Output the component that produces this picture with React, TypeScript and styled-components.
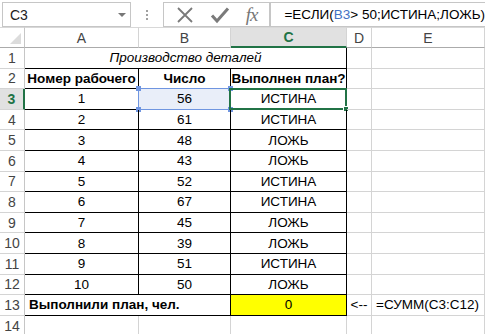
import React from "react";
import styled, { createGlobalStyle } from "styled-components";

const GlobalStyle = createGlobalStyle`
  html, body { margin: 0; padding: 0; background: #ffffff; }
  body { font-family: "Liberation Sans", Arial, sans-serif; }
  * { box-sizing: border-box; }
`;

const Page = styled.div`
  width: 485px;
  height: 334px;
  overflow: hidden;
  display: flex;
  flex-direction: column;
  background: #fff;
`;

const TopBar = styled.div`
  display: flex;
  align-items: flex-start;
  height: 37px;
  padding: 2px 0 0 2px;
`;

const NameBox = styled.div`
  width: 135px;
  height: 25px;
  border: 1px solid #c6c6c6;
  display: flex;
  align-items: center;
  justify-content: space-between;
  padding: 0 4px 0 7px;
  font-size: 14px;
  color: #222;
`;

const DropArrow = styled.span`
  width: 0;
  height: 0;
  border-left: 4px solid transparent;
  border-right: 4px solid transparent;
  border-top: 4px solid #777;
`;

const Dots = styled.div`
  width: 34px;
  height: 25px;
  display: flex;
  flex-direction: column;
  align-items: center;
  justify-content: center;
  gap: 2px;
  & > span { width: 2px; height: 2px; background: #a0a0a0; }
`;

const FxButtons = styled.div`
  width: 113px;
  height: 25px;
  border: 1px solid #c6c6c6;
  display: flex;
  align-items: center;
  justify-content: space-around;
  padding: 0 4px;
`;

const Fx = styled.span`
  font-family: "Liberation Serif", "Times New Roman", serif;
  font-style: italic;
  font-size: 19px;
  color: #777;
  letter-spacing: -1px;
`;

const FormulaInput = styled.div`
  flex: 1;
  height: 25px;
  border: 1px solid #c6c6c6;
  border-right: none;
  display: flex;
  align-items: center;
  padding-left: 13px;
  font-size: 13.5px;
  color: #000;
  white-space: nowrap;
`;

const RefText = styled.span`
  color: #4472c4;
`;

const Sheet = styled.div`
  display: grid;
  grid-template-columns: 25px 114px 92px 116px 25px 113px;
  grid-template-rows: 21px repeat(14, 20.6px);
  font-size: 13.5px;
`;

const Corner = styled.div`
  position: relative;
  border-right: 1px solid #c6c6c6;
  border-bottom: 1px solid #ababab;
  border-top: 1px solid #d8d8d8;
  &::after {
    content: "";
    position: absolute;
    right: 3px;
    bottom: 3px;
    width: 0;
    height: 0;
    border-left: 11px solid transparent;
    border-bottom: 11px solid #dcdcdc;
  }
`;

const ColHead = styled.div<{ $active?: boolean }>`
  display: flex;
  align-items: center;
  justify-content: center;
  border-top: 1px solid #d8d8d8;
  border-right: 1px solid #d4d4d4;
  border-bottom: ${(p) => (p.$active ? "2px solid #217346" : "1px solid #ababab")};
  background: ${(p) => (p.$active ? "#e1e1e1" : "#fff")};
  color: ${(p) => (p.$active ? "#217346" : "#444")};
  font-weight: ${(p) => (p.$active ? "bold" : "normal")};
  font-size: 14px;
`;

const RowHead = styled.div<{ $active?: boolean }>`
  display: flex;
  align-items: center;
  justify-content: center;
  border-bottom: 1px solid #d4d4d4;
  border-right: ${(p) => (p.$active ? "2px solid #217346" : "1px solid #c6c6c6")};
  background: ${(p) => (p.$active ? "#e1e1e1" : "#fff")};
  color: ${(p) => (p.$active ? "#217346" : "#444")};
  font-weight: ${(p) => (p.$active ? "bold" : "normal")};
  font-size: 14px;
`;

const Cell = styled.div<{
  $span?: number;
  $align?: "left" | "center";
  $bold?: boolean;
  $italic?: boolean;
  $bg?: string;
  $br?: boolean;
  $bb?: boolean;
}>`
  position: relative;
  grid-column: span ${(p) => p.$span ?? 1};
  display: flex;
  align-items: center;
  justify-content: ${(p) => (p.$align === "left" ? "flex-start" : "center")};
  padding: 0 4px;
  white-space: nowrap;
  overflow: visible;
  color: #000;
  font-weight: ${(p) => (p.$bold ? "bold" : "normal")};
  font-style: ${(p) => (p.$italic ? "italic" : "normal")};
  background: ${(p) => p.$bg ?? "transparent"};
  border-right: 1px solid ${(p) => (p.$br ? "#000" : "#d4d4d4")};
  border-bottom: 1px solid ${(p) => (p.$bb ? "#000" : "#d4d4d4")};
`;

const RefBox = styled.div`
  position: absolute;
  left: -1px;
  top: -1px;
  right: -1px;
  bottom: -1px;
  border: 1.5px solid #6f95e0;
  pointer-events: none;
`;

const RefHandle = styled.span<{ $x: "l" | "r"; $y: "t" | "b" }>`
  position: absolute;
  width: 5px;
  height: 5px;
  background: #6f95e0;
  ${(p) => (p.$x === "l" ? "left: -3px;" : "right: -3px;")}
  ${(p) => (p.$y === "t" ? "top: -3px;" : "bottom: -3px;")}
`;

const ActiveBox = styled.div`
  position: absolute;
  left: -2px;
  top: -1px;
  right: -1px;
  bottom: -1px;
  border: 2px solid #217346;
  pointer-events: none;
`;

const FillHandle = styled.span`
  position: absolute;
  right: -4px;
  bottom: -4px;
  width: 6px;
  height: 6px;
  background: #217346;
  border: 1px solid #fff;
`;

const rows: [number, number, string][] = [
  [1, 56, "ИСТИНА"],
  [2, 61, "ИСТИНА"],
  [3, 48, "ЛОЖЬ"],
  [4, 43, "ЛОЖЬ"],
  [5, 52, "ИСТИНА"],
  [6, 67, "ИСТИНА"],
  [7, 45, "ЛОЖЬ"],
  [8, 39, "ЛОЖЬ"],
  [9, 51, "ИСТИНА"],
  [10, 50, "ЛОЖЬ"],
];

const CrossIcon = () => (
  <svg width="18" height="18" viewBox="0 0 18 18">
    <path d="M2 2 L16 16 M16 2 L2 16" stroke="#7a7a7a" strokeWidth="1.8" fill="none" />
  </svg>
);

const CheckIcon = () => (
  <svg width="20" height="18" viewBox="0 0 20 18">
    <path d="M2 9.5 L7 15 L18 2.5" stroke="#7a7a7a" strokeWidth="3" fill="none" />
  </svg>
);

export default function App() {
  return (
    <Page>
      <GlobalStyle />
      <TopBar>
        <NameBox>
          C3
          <DropArrow />
        </NameBox>
        <Dots>
          <span />
          <span />
          <span />
        </Dots>
        <FxButtons>
          <CrossIcon />
          <CheckIcon />
          <Fx>fx</Fx>
        </FxButtons>
        <FormulaInput>
          =ЕСЛИ(<RefText>B3</RefText>&gt; 50;ИСТИНА;ЛОЖЬ)
        </FormulaInput>
      </TopBar>
      <Sheet>
        <Corner />
        <ColHead>A</ColHead>
        <ColHead>B</ColHead>
        <ColHead $active>C</ColHead>
        <ColHead>D</ColHead>
        <ColHead>E</ColHead>

        <RowHead>1</RowHead>
        <Cell $span={3} $italic $br $bb>
          Производство деталей
        </Cell>
        <Cell />
        <Cell />

        <RowHead>2</RowHead>
        <Cell $bold $br $bb>Номер рабочего</Cell>
        <Cell $bold $br $bb>Число</Cell>
        <Cell $bold $br $bb>Выполнен план?</Cell>
        <Cell />
        <Cell />

        {rows.map(([n, v, r], i) => (
          <React.Fragment key={n}>
            <RowHead $active={i === 0}>{i + 3}</RowHead>
            <Cell $br $bb>{n}</Cell>
            <Cell $br $bb $bg={i === 0 ? "#e9eef9" : undefined}>
              {v}
              {i === 0 && (
                <RefBox>
                  <RefHandle $x="l" $y="t" />
                  <RefHandle $x="r" $y="t" />
                  <RefHandle $x="l" $y="b" />
                  <RefHandle $x="r" $y="b" />
                </RefBox>
              )}
            </Cell>
            <Cell $br $bb>
              {r}
              {i === 0 && (
                <ActiveBox>
                  <FillHandle />
                </ActiveBox>
              )}
            </Cell>
            <Cell />
            <Cell />
          </React.Fragment>
        ))}

        <RowHead>13</RowHead>
        <Cell $span={2} $align="left" $bold $br $bb>
          Выполнили план, чел.
        </Cell>
        <Cell $bg="#ffff00" $br $bb>0</Cell>
        <Cell>&lt;--</Cell>
        <Cell $align="left">=СУММ(C3:C12)</Cell>

        <RowHead>14</RowHead>
        <Cell />
        <Cell />
        <Cell />
        <Cell />
        <Cell />
      </Sheet>
    </Page>
  );
}
